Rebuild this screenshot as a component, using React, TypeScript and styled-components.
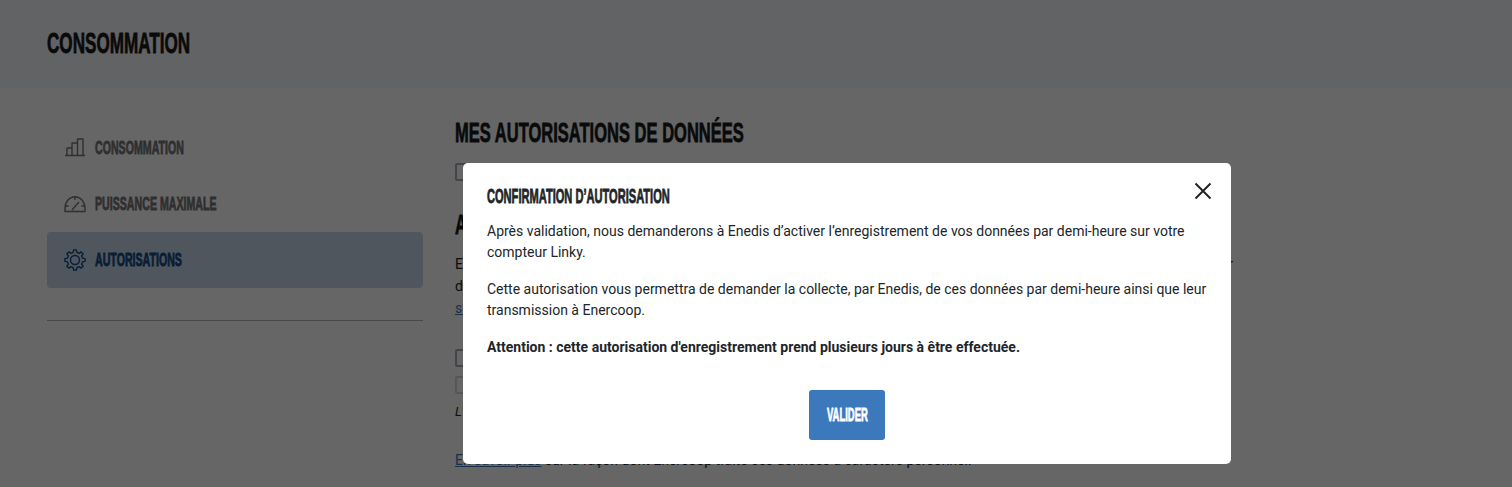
import React from "react";
import styled, { createGlobalStyle } from "styled-components";

const Global = createGlobalStyle`
  html, body { margin: 0; padding: 0; height: 100%; overflow: hidden; background: #fff; }
  body { font-family: Roboto, "Liberation Sans", sans-serif; font-size: 14px; line-height: 22px; color: #212529; }
  * { box-sizing: border-box; }
`;

const Page = styled.div`
  height: 487px;
  overflow: hidden;
`;
const Header = styled.header`
  height: 88px;
  background: #f6f8fb;
  padding: 28px 47px 0;
`;
const Display = styled.span<{ $size: number; $sx: number }>`
  display: inline-block;
  font-family: "Liberation Sans", sans-serif;
  font-weight: 700;
  font-size: ${(p) => p.$size}px;
  line-height: 1;
  white-space: nowrap;
  transform: scaleX(${(p) => p.$sx});
  transform-origin: left center;
  -webkit-text-stroke: 0.8px currentColor;
`;
const PageTitle = styled.h1`
  margin: 0;
  height: 30px;
  color: #1a1a1a;
  display: flex;
  align-items: center;
`;
const Body = styled.div`
  display: grid;
  grid-template-columns: 376px 778px;
  column-gap: 32px;
  padding: 32px 47px 0;
`;
const Side = styled.nav`
  display: flex;
  flex-direction: column;
  min-width: 0;
`;
const NavItem = styled.div<{ $active?: boolean }>`
  height: 56px;
  display: flex;
  align-items: center;
  gap: 9px;
  padding-left: 17px;
  border-radius: 4px;
  background: ${(p) => (p.$active ? "#c5d7e9" : "transparent")};
  color: ${(p) => (p.$active ? "#154b84" : "#767676")};
  overflow: hidden;
`;
const NavIcon = styled.svg`
  width: 22px;
  height: 22px;
  fill: none;
  stroke: currentColor;
  stroke-width: 1.4;
  stroke-linejoin: round;
  flex: none;
`;
const Rule = styled.hr`
  margin: 32px 0 0;
  border: 0;
  border-top: 1px solid #b4b4b4;
`;
const Main = styled.main`
  display: flex;
  flex-direction: column;
  align-items: flex-start;
  min-width: 0;
`;
const H2 = styled.h2<{ $top: number }>`
  margin: ${(p) => p.$top}px 0 0;
  height: 28px;
  display: flex;
  align-items: center;
  color: #1a1a1a;
`;
const Box = styled.span<{ $top: number; $faint?: boolean }>`
  display: block;
  width: 18px;
  height: 18px;
  margin-top: ${(p) => p.$top}px;
  border: 2px solid ${(p) => (p.$faint ? "#d8d8d8" : "#a8a8bc")};
  border-radius: 2px;
  background: #fff;
`;
const Copy = styled.div<{ $top?: number; $italic?: boolean }>`
  margin-top: ${(p) => p.$top ?? 0}px;
  font-style: ${(p) => (p.$italic ? "italic" : "normal")};
  font-size: ${(p) => (p.$italic ? 13 : 14)}px;
  white-space: nowrap;
`;
const JustifiedCopy = styled(Copy)`
  width: 778px;
  white-space: normal;
  text-align-last: justify;
`;
const Link = styled.a`
  color: #3b78bc;
  text-decoration: underline;
`;
const Overlay = styled.div`
  position: fixed;
  inset: 0;
  background: rgba(0, 0, 0, 0.6);
  padding: 163px 0 0 463px;
`;
const Modal = styled.div`
  position: relative;
  width: 768px;
  height: 301px;
  background: #fff;
  border-radius: 5px;
  padding: 23px 24px 24px;
`;
const ModalTitle = styled.h3`
  margin: 0 0 15px;
  height: 20px;
  display: flex;
  align-items: center;
  color: #212529;
`;
const Para = styled.p<{ $bold?: boolean }>`
  margin: 0 0 16px;
  line-height: 21px;
  font-weight: ${(p) => (p.$bold ? 700 : 400)};
`;
const Close = styled.button`
  position: absolute;
  top: 18px;
  right: 18px;
  width: 20px;
  height: 20px;
  padding: 0;
  border: 0;
  background: none;
  color: #212529;
`;
const Actions = styled.div`
  display: flex;
  justify-content: center;
  margin-top: 32px;
`;
const Button = styled.button`
  width: 76px;
  height: 50px;
  background: #3b78bc;
  color: #fff;
  border: 0;
  border-radius: 3px;
  padding: 0 0 0 18px;
  display: flex;
  align-items: center;
`;

function gearPath(cx: number, cy: number, teeth: number, outer: number, inner: number) {
  const pts: string[] = [];
  const step = (Math.PI * 2) / teeth;
  for (let i = 0; i < teeth; i++) {
    const a = i * step - Math.PI / 2;
    const corners: [number, number][] = [
      [a - step * 0.3, inner],
      [a - step * 0.17, outer],
      [a + step * 0.17, outer],
      [a + step * 0.3, inner],
    ];
    for (const [t, r] of corners) {
      pts.push(`${(cx + r * Math.cos(t)).toFixed(2)} ${(cy + r * Math.sin(t)).toFixed(2)}`);
    }
  }
  return `M${pts.join("L")}Z`;
}

export default function App() {
  return (
    <Page>
      <Global />
      <Header>
        <PageTitle><Display $size={29} $sx={0.59}>CONSOMMATION</Display></PageTitle>
      </Header>
      <Body>
        <Side>
          <NavItem>
            <NavIcon viewBox="0 0 22 22">
              <path d="M1 18.500h20M3 18.500V11h5v7.500M8 18.500V6h5.500v12.500M13.500 18.500V2H19v16.500" />
            </NavIcon>
            <Display $size={18} $sx={0.59}>CONSOMMATION</Display>
          </NavItem>
          <NavItem>
            <NavIcon viewBox="0 0 22 22">
              <path d="M1 15.500C1 8.500 5.500 3.700 11 3.700s10 4.800 10 11.800v3H1zM1.500 13h3M17.500 13h3M11 3.700v3.300M8 17l7-8" />
            </NavIcon>
            <Display $size={18} $sx={0.59}>PUISSANCE MAXIMALE</Display>
          </NavItem>
          <NavItem $active>
            <NavIcon viewBox="0 0 22 22">
              <circle cx="11" cy="11" r="4.500" />
              <path d={gearPath(11, 11, 8, 10.2, 7.8)} />
            </NavIcon>
            <Display $size={18} $sx={0.59}>AUTORISATIONS</Display>
          </NavItem>
          <Rule />
        </Side>
        <Main>
          <H2 $top={-1}><Display $size={28} $sx={0.59}>MES AUTORISATIONS DE DONNÉES</Display></H2>
          <Box $top={16} />
          <H2 $top={30}><Display $size={28} $sx={0.59}>AUTORISATION D’ENREGISTREMENT</Display></H2>
          <JustifiedCopy $top={14}>Enercoop peut demander à Enedis l’enregistrement de vos données par demi-heure sur votre compteur</JustifiedCopy>
          <Copy>des données</Copy>
          <Copy><Link>s’informer</Link></Copy>
          <Box $top={30} />
          <Box $top={9} $faint />
          <Copy $top={7} $italic>L'autorisation</Copy>
          <Copy $top={26}><Link>En savoir plus</Link> sur la façon dont Enercoop traite ces données à caractère personnel.</Copy>
        </Main>
      </Body>
      <Overlay>
        <Modal>
          <ModalTitle><Display $size={20} $sx={0.554}>CONFIRMATION D’AUTORISATION</Display></ModalTitle>
          <Close aria-label="Fermer">
            <svg viewBox="0 0 20 20" width="20" height="20" fill="none" stroke="currentColor" strokeWidth="2">
              <path d="M2.500 2.500l15 15M17.500 2.500l-15 15" />
            </svg>
          </Close>
          <Para>Après validation, nous demanderons à Enedis d’activer l’enregistrement de vos données par demi-heure sur votre compteur Linky.</Para>
          <Para>Cette autorisation vous permettra de demander la collecte, par Enedis, de ces données par demi-heure ainsi que leur transmission à Enercoop.</Para>
          <Para $bold>Attention : cette autorisation d'enregistrement prend plusieurs jours à être effectuée.</Para>
          <Actions>
            <Button><Display $size={18} $sx={0.525}>VALIDER</Display></Button>
          </Actions>
        </Modal>
      </Overlay>
    </Page>
  );
}
